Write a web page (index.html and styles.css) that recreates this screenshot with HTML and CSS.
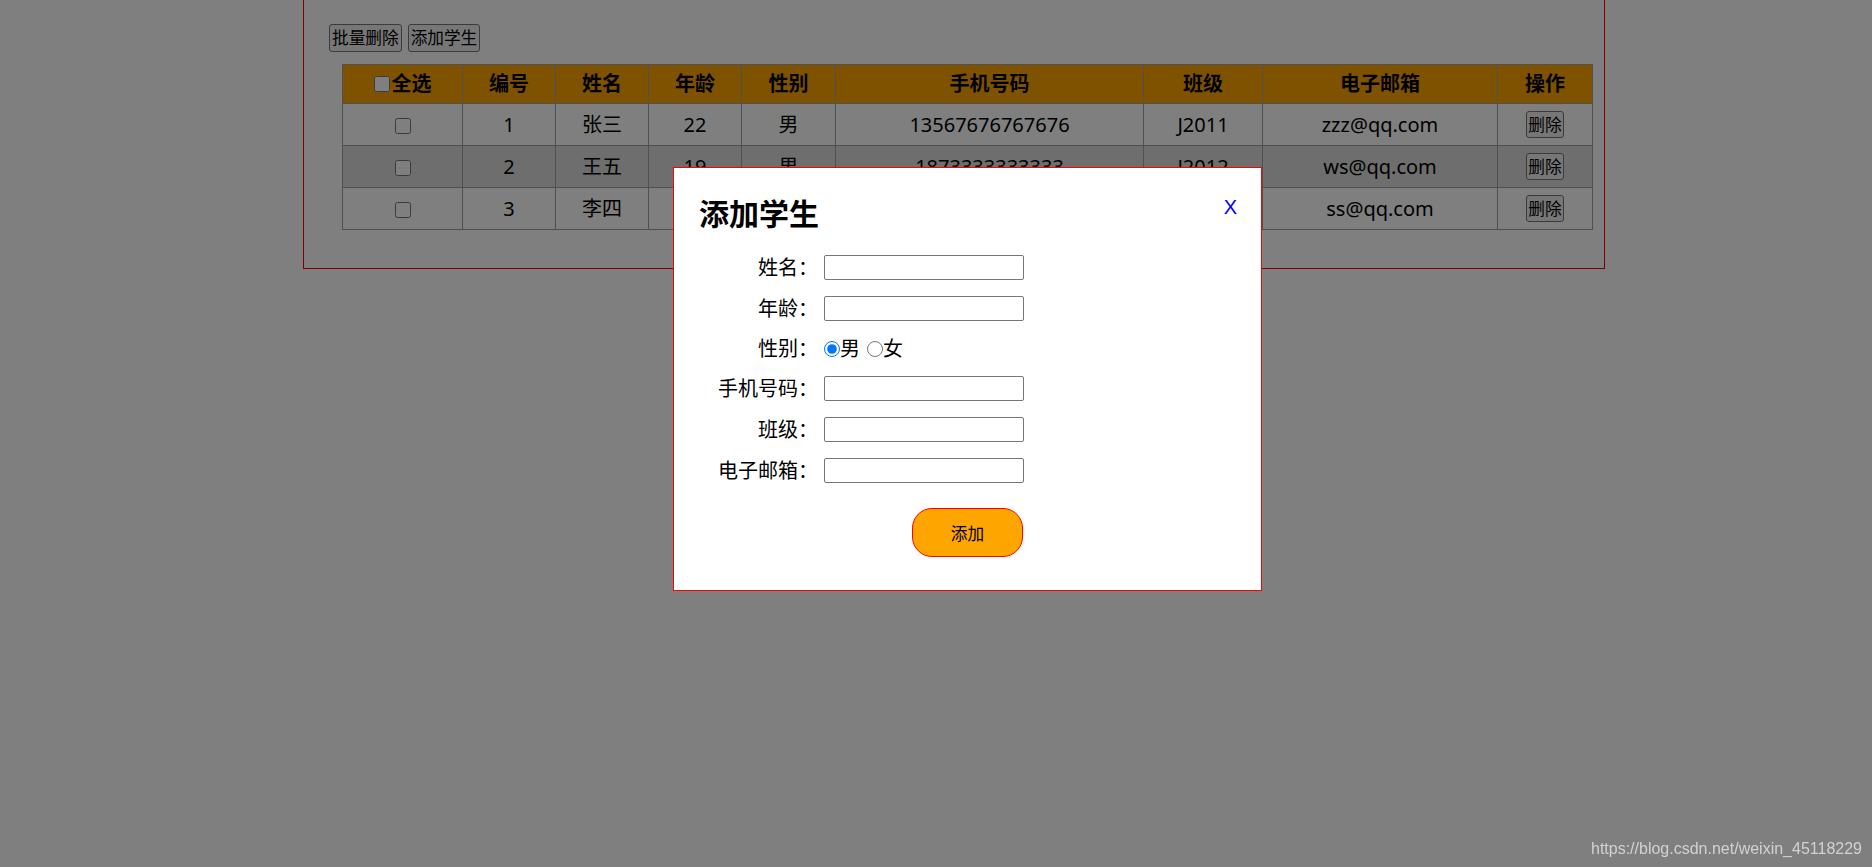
FILE: index.html
```html
<!DOCTYPE html>
<html lang="zh-CN">
<head>
<meta charset="utf-8">
<title>学生管理</title>
<link rel="stylesheet" href="styles.css">
</head>
<body>
<div class="page">
  <div class="toolbar">
    <button class="btn">批量删除</button>
    <button class="btn">添加学生</button>
  </div>
  <table class="grid">
    <colgroup>
      <col class="c-check"><col class="c-num"><col class="c-num"><col class="c-num"><col class="c-sex"><col class="c-phone"><col class="c-class"><col class="c-mail"><col class="c-op">
    </colgroup>
    <thead>
      <tr class="head">
        <th><span class="all"><input type="checkbox" class="chk">全选</span></th>
        <th>编号</th><th>姓名</th><th>年龄</th><th>性别</th><th>手机号码</th><th>班级</th><th>电子邮箱</th><th>操作</th>
      </tr>
    </thead>
    <tbody>
      <tr>
        <td><input type="checkbox" class="chk"></td>
        <td>1</td><td>张三</td><td>22</td><td>男</td><td>13567676767676</td><td>J2011</td><td>zzz@qq.com</td>
        <td><button class="btn btn-del">删除</button></td>
      </tr>
      <tr class="hover">
        <td><input type="checkbox" class="chk"></td>
        <td>2</td><td>王五</td><td>19</td><td>男</td><td>1873333333333</td><td>J2012</td><td>ws@qq.com</td>
        <td><button class="btn btn-del">删除</button></td>
      </tr>
      <tr>
        <td><input type="checkbox" class="chk"></td>
        <td>3</td><td>李四</td><td>20</td><td>女</td><td>15688888888</td><td>J2013</td><td>ss@qq.com</td>
        <td><button class="btn btn-del">删除</button></td>
      </tr>
    </tbody>
  </table>
</div>

<div class="overlay"></div>

<div class="modal">
  <a class="close">X</a>
  <h2 class="title">添加学生</h2>
  <div class="form">
    <label class="lbl">姓名：</label><input class="field" type="text">
    <label class="lbl">年龄：</label><input class="field" type="text">
    <label class="lbl">性别：</label>
    <div class="radios"><input type="radio" name="sex" class="radio" checked>男<input type="radio" name="sex" class="radio r2">女</div>
    <label class="lbl">手机号码：</label><input class="field" type="text">
    <label class="lbl">班级：</label><input class="field" type="text">
    <label class="lbl">电子邮箱：</label><input class="field" type="text">
  </div>
  <div class="actions"><button class="add">添加</button></div>
</div>

<div class="watermark">https://blog.csdn.net/weixin_45118229</div>
</body>
</html>
```

FILE: styles.css
```css
html, body {
  margin: 0;
  padding: 0;
  background: #ffffff;
}
body {
  font-family: "Noto Sans", "Noto Sans CJK SC", sans-serif;
  font-size: 20px;
  color: #000;
}

.page {
  margin-left: 303px;
  width: 1300px;
  border: 1px solid #ff0000;
  border-top: 0;
  padding: 24px 0 38px 0;
}

.toolbar {
  display: flex;
  gap: 6px;
  padding-left: 25px;
  height: 28px;
}

.btn {
  font-family: "Noto Sans", "Noto Sans CJK SC", sans-serif;
  font-size: 16.67px;
  line-height: 22px;
  padding: 0 2px;
  background: #efefef;
  border: 1px solid #767676;
  border-radius: 3px;
  color: #000;
  height: 28px;
}

.grid {
  margin: 12px 0 0 38px;
  width: 1251px;
  table-layout: fixed;
  border-collapse: collapse;
  border: 1px solid #a0a0a0;
}
.c-check { width: 120px; }
.c-num { width: 93px; }
.c-sex { width: 94px; }
.c-phone { width: 308px; }
.c-class { width: 119px; }
.c-mail { width: 235px; }
.c-op { width: 95px; }

.grid th, .grid td {
  border: 1px solid #a0a0a0;
  padding: 0;
  text-align: center;
  vertical-align: middle;
  line-height: 24px;
}
.grid th {
  background: #ffa500;
  font-weight: bold;
}
.grid tr.head { height: 39px; }
.grid tbody tr { height: 42px; background: #ffffff; }
.grid tbody tr.hover { background: #dddddd; }

.all {
  display: inline-flex;
  align-items: center;
  gap: 2px;
}
.chk {
  width: 16px;
  height: 16px;
  margin: 0;
  vertical-align: middle;
}

.btn-del {
  height: 27px;
  padding: 0 1px;
  line-height: 21px;
}

.overlay {
  position: fixed;
  inset: 0;
  background: rgba(0, 0, 0, 0.5);
}

.modal {
  position: fixed;
  left: 673px;
  top: 167px;
  width: 587px;
  height: 422px;
  background: #ffffff;
  border: 1px solid #ff0000;
  box-sizing: content-box;
}

.close {
  position: absolute;
  top: 29px;
  right: 24px;
  font-family: "Liberation Sans", sans-serif;
  font-size: 20px;
  line-height: 20px;
  color: #0000ff;
  cursor: pointer;
}

.title {
  margin: 31px 0 0 25px;
  font-size: 30px;
  line-height: 30px;
  font-weight: bold;
}

.form {
  display: grid;
  grid-template-columns: 100px 200px;
  column-gap: 6px;
  row-gap: 16px;
  margin: 26px 0 0 44px;
  align-items: center;
}
.lbl {
  text-align: right;
  font-size: 20px;
  line-height: 23px;
  white-space: nowrap;
}
.field {
  box-sizing: border-box;
  width: 200px;
  height: 25px;
  margin: 0;
  border: 1px solid #767676;
  border-radius: 2px;
  background: #fff;
}
.radios {
  display: flex;
  align-items: center;
  height: 23px;
  font-size: 20px;
  line-height: 23px;
}
.radio {
  width: 16px;
  height: 16px;
  margin: 0;
}
.radio.r2 { margin-left: 7px; }

.actions {
  display: flex;
  justify-content: center;
  margin-top: 25px;
}
.add {
  width: 111px;
  height: 49px;
  background: #ffa500;
  border: 1px solid #ff0000;
  border-radius: 20px;
  font-family: "Noto Sans", "Noto Sans CJK SC", sans-serif;
  font-size: 16.67px;
  color: #000;
}

.watermark {
  position: fixed;
  right: 10px;
  bottom: 8px;
  font-family: "Liberation Sans", sans-serif;
  font-size: 16px;
  line-height: 20px;
  color: #d2d2d2;
}
```
